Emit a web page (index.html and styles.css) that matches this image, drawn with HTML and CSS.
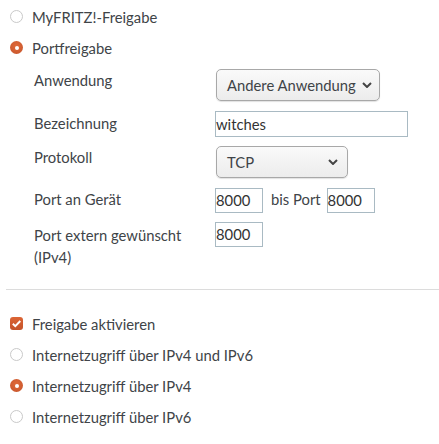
FILE: index.html
```html
<!DOCTYPE html>
<html lang="de">
<head>
<meta charset="utf-8">
<link rel="stylesheet" href="styles.css">
</head>
<body>
<div class="page">
  <div class="opt"><span class="radio"></span><span>MyFRITZ!-Freigabe</span></div>
  <div class="opt"><span class="radio on"></span><span>Portfreigabe</span></div>

  <div class="form">
    <div class="row r1">
      <div class="lbl">Anwendung</div>
      <div class="sel sel-app"><span>Andere Anwendung</span><svg class="chev" viewBox="0 0 10 6"><path d="M1 1l4 4 4-4" fill="none" stroke="#444" stroke-width="2"/></svg></div>
    </div>
    <div class="row r2">
      <div class="lbl">Bezeichnung</div>
      <div class="inp inp-wide">witches</div>
    </div>
    <div class="row r3">
      <div class="lbl">Protokoll</div>
      <div class="sel sel-proto"><span>TCP</span><svg class="chev" viewBox="0 0 10 6"><path d="M1 1l4 4 4-4" fill="none" stroke="#444" stroke-width="2"/></svg></div>
    </div>
    <div class="row r4">
      <div class="lbl">Port an Gerät</div>
      <div class="inp inp-port">8000</div>
      <span class="bis">bis Port</span>
      <div class="inp inp-port">8000</div>
    </div>
    <div class="row r5">
      <div class="lbl">Port extern gewünscht (IPv4)</div>
      <div class="inp inp-port">8000</div>
    </div>
  </div>

  <hr class="sep">

  <div class="opt first"><span class="check"><svg viewBox="0 0 12 12"><path d="M2.6 6.2l2.3 2.3 4.6-4.8" fill="none" stroke="#fff" stroke-width="1.8"/></svg></span><span>Freigabe aktivieren</span></div>
  <div class="opt"><span class="radio"></span><span>Internetzugriff über IPv4 und IPv6</span></div>
  <div class="opt"><span class="radio on"></span><span>Internetzugriff über IPv4</span></div>
  <div class="opt"><span class="radio"></span><span>Internetzugriff über IPv6</span></div>
</div>
</body>
</html>
```
FILE: styles.css
```css
* { box-sizing: border-box; }
html, body { margin: 0; padding: 0; background: #fff; }
body {
  font-family: "Lato", "Liberation Sans", sans-serif;
  font-size: 14.8px;
  color: #404448;
}
.page { padding: 1px 0 0 0; width: 439px; }

.opt {
  display: flex;
  align-items: center;
  height: 31px;
  padding-left: 10px;
}
.opt > span:last-child { margin-left: 9px; line-height: 20px; }

.radio {
  width: 13px; height: 13px;
  border-radius: 50%;
  border: 1px solid #c9c9c9;
  background: #fff;
  flex: none;
  position: relative;
}
.radio.on {
  border: none;
  background: radial-gradient(circle at 50% 40%, #e06a3a 0%, #c4532a 100%);
}
.radio.on::after {
  content: "";
  position: absolute;
  left: 4.5px; top: 4.5px;
  width: 4px; height: 4px;
  border-radius: 50%;
  background: #fff;
}

.check {
  width: 13px; height: 13px;
  border-radius: 3px;
  background: linear-gradient(#dc6535, #c4532a);
  flex: none;
  display: flex;
}
.check svg { width: 13px; height: 13px; }

.form { padding-left: 34px; margin-top: 6px; }
.row { display: flex; align-items: flex-start; }
.lbl { width: 181px; flex: none; line-height: 22px; }
.r2 { margin-top: 10px; }
.r3 { margin-top: 9px; }
.r4 { margin-top: 10px; }
.r5 { margin-top: 9px; }
.r2 .lbl { padding-top: 1px; }
.r5 .lbl { padding-top: 2px; }

.sel {
  height: 32px;
  border: 1px solid #a8a8a8;
  border-radius: 5px;
  background: linear-gradient(#fafafa, #ececec);
  box-shadow: 0 1px 1px rgba(0,0,0,0.12);
  display: flex;
  align-items: center;
  justify-content: space-between;
  padding: 0 7px 0 10px;
  margin-left: 1px;
}
.sel-app { width: 164px; }
.sel-proto { width: 132px; padding-right: 9px; }
.chev { width: 10px; height: 6px; }

.inp {
  height: 26px;
  border: 1px solid #a9bac3;
  background: #fff;
  line-height: 24px;
  padding-left: 0;
  color: #333;
}
.inp-wide { width: 193px; }
.inp-port { width: 48px; height: 25px; line-height: 23px; }
.bis { margin: 0 6px 0 8px; line-height: 23px; }

.sep {
  margin: 21px 0 0 6px;
  border: none;
  border-top: 1px solid #dcdcdc;
  height: 0;
  width: 433px;
}
.opt.first { margin-top: 18px; }
```
